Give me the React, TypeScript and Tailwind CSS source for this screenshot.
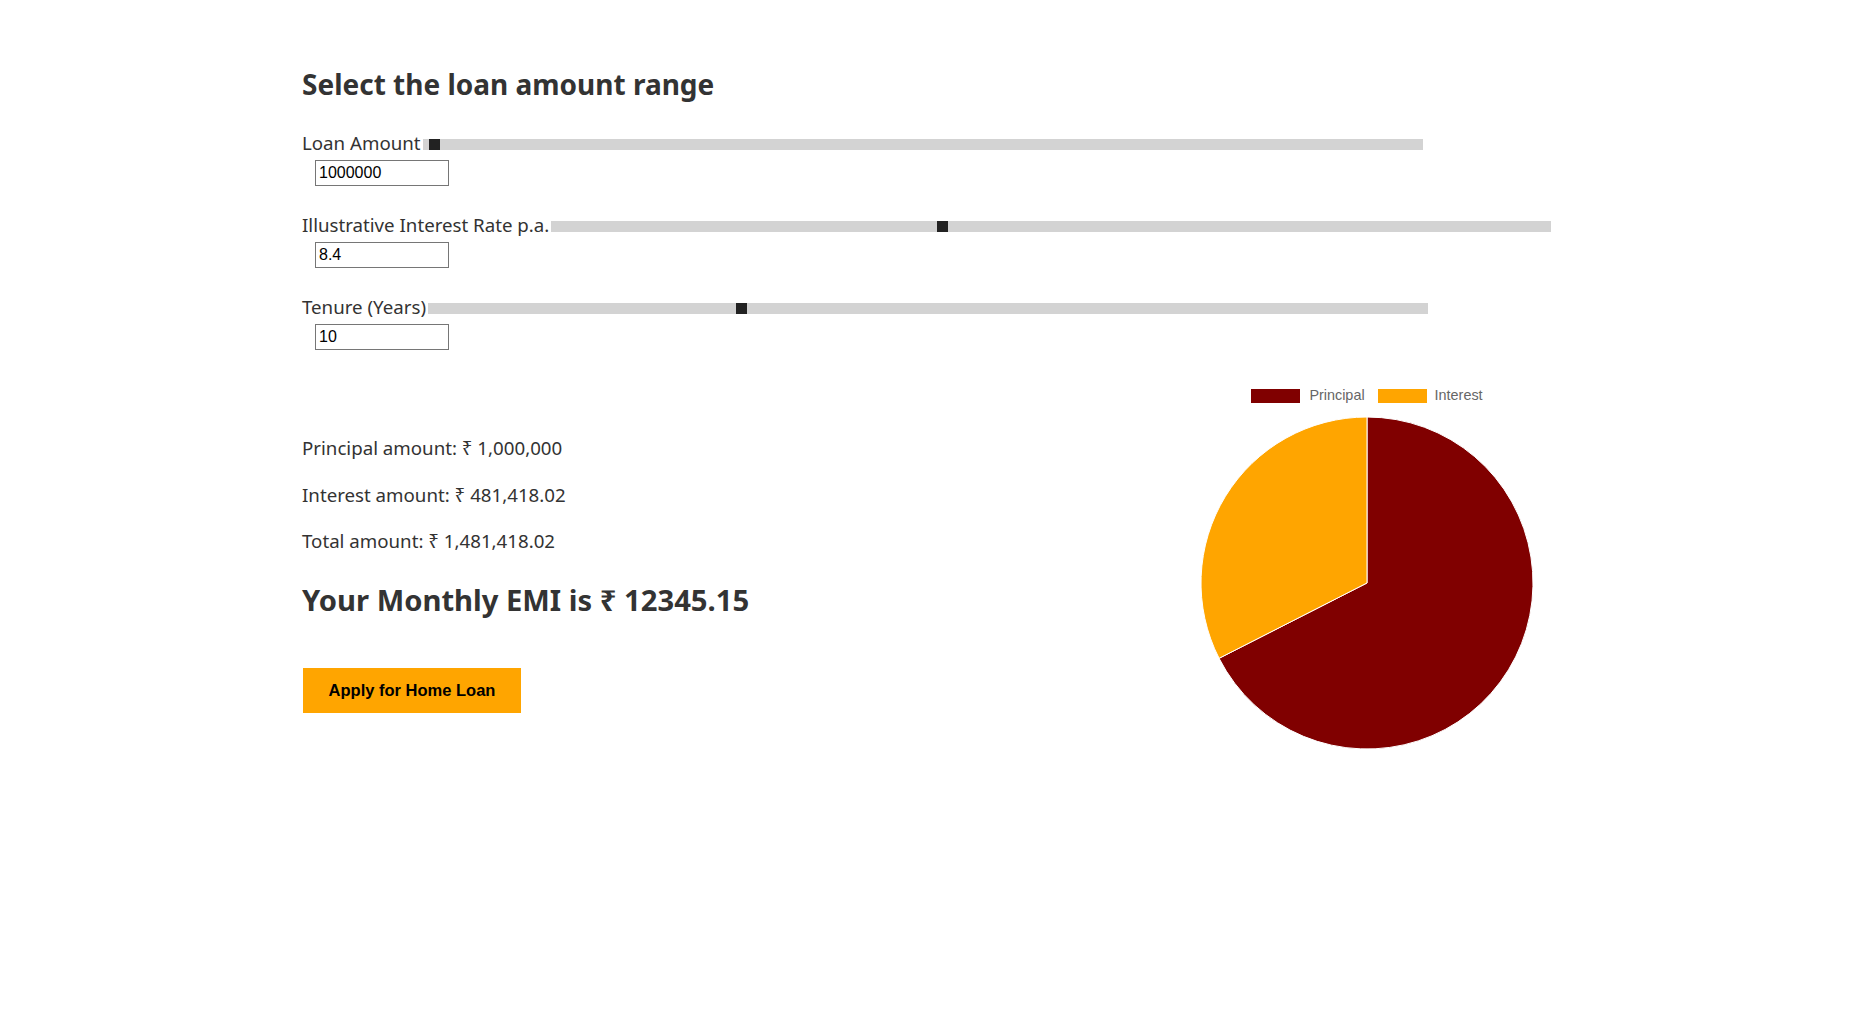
import React from "react";

function Slider({ label, thumb }: { label: string; thumb: number }) {
  return (
    <div className="leading-[24px] text-[18.7px] whitespace-nowrap">
      <span>{label}</span>
      <div className="relative ml-[2px] inline-block h-[11px] w-[1000px] bg-[#d3d3d3] align-baseline">
        <div
          className="absolute top-0 h-[11px] w-[11px] bg-[#222222]"
          style={{ left: thumb }}
        />
      </div>
    </div>
  );
}

function NumInput({ value }: { value: string }) {
  return (
    <input
      readOnly
      value={value}
      className="mt-[5px] ml-[13px] block h-[26px] w-[134px] border border-[#767676] px-[3px] font-['Liberation_Sans',Arial,sans-serif] text-[16px] text-black outline-none"
    />
  );
}

export default function App() {
  const cx = 167;
  const cy = 167;
  const r = 166;
  const frac = 1000000 / 1481418.02;
  const ang = (-90 + frac * 360) * (Math.PI / 180);
  const ex = cx + r * Math.cos(ang);
  const ey = cy + r * Math.sin(ang);

  return (
    <div className="min-h-[1016px] w-full bg-white font-['Noto_Sans',sans-serif] text-[#333333]">
      <div className="mx-auto w-[1254px] pt-[68px]">
        <h2 className="text-[28px] font-bold leading-[32px]">
          Select the loan amount range
        </h2>

        <div className="mt-[31px]">
          <Slider label="Loan Amount" thumb={6} />
          <NumInput value="1000000" />
        </div>
        <div className="mt-[27px]">
          <Slider label="Illustrative Interest Rate p.a." thumb={386} />
          <NumInput value="8.4" />
        </div>
        <div className="mt-[27px]">
          <Slider label="Tenure (Years)" thumb={308} />
          <NumInput value="10" />
        </div>

        <div className="flex items-start">
          <div className="flex-1 pt-[86px]">
            <div className="flex flex-col gap-[22.5px] text-[18.7px] leading-[24px]">
              <p>Principal amount: ₹ 1,000,000</p>
              <p>Interest amount: ₹ 481,418.02</p>
              <p>Total amount: ₹ 1,481,418.02</p>
            </div>
            <h3 className="mt-[29px] text-[29.2px] font-bold leading-[36px]">
              Your Monthly EMI is ₹ 12345.15
            </h3>
            <button className="mt-[50px] ml-[1px] h-[45px] w-[218px] bg-[#ffa500] font-['Liberation_Sans',Arial,sans-serif] text-[16.5px] font-bold text-black">
              Apply for Home Loan
            </button>
          </div>

          <div className="mr-[-1px] flex w-[380px] flex-col items-center pt-[39px]">
            <div className="flex h-[14px] items-center font-['Liberation_Sans',Arial,sans-serif] text-[14.4px] text-[#666666]">
              <span className="h-[14px] w-[49px] bg-[#800000]" />
              <span className="ml-[9px]">Principal</span>
              <span className="ml-[13px] h-[14px] w-[49px] bg-[#ffa500]" />
              <span className="ml-[8px]">Interest</span>
            </div>
            <svg width="334" height="334" viewBox="0 0 334 334" className="mt-[13px]">
              <path
                d={`M ${cx} ${cy} L ${cx} ${cy - r} A ${r} ${r} 0 1 1 ${ex} ${ey} Z`}
                fill="#800000"
                stroke="#ffffff"
                strokeWidth="1"
              />
              <path
                d={`M ${cx} ${cy} L ${ex} ${ey} A ${r} ${r} 0 0 1 ${cx} ${cy - r} Z`}
                fill="#ffa500"
                stroke="#ffffff"
                strokeWidth="1"
              />
            </svg>
          </div>
        </div>
      </div>
    </div>
  );
}
